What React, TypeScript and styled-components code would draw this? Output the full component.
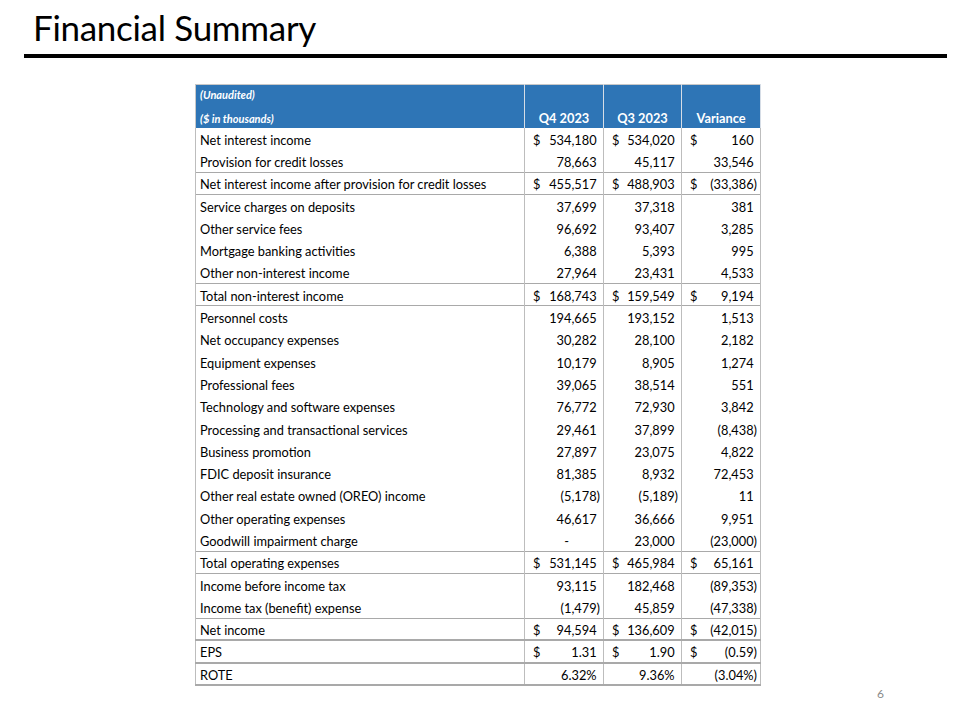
import React from "react";
import styled, { createGlobalStyle } from "styled-components";

const Global = createGlobalStyle`
  html, body { margin: 0; padding: 0; background: #fff; }
  body { font-family: Lato, "Open Sans", Arial, sans-serif; }
`;

const Page = styled.div`
  width: 958px;
  height: 720px;
  display: flex;
  flex-direction: column;
  box-sizing: border-box;
  overflow: hidden;
  & > * { flex-shrink: 0; }
`;

const Title = styled.h1`
  margin: 0;
  padding: 9px 0 0 33px;
  height: 45px;
  box-sizing: border-box;
  font-family: Lato, sans-serif;
  font-weight: 400;
  font-size: 35px;
  line-height: 36px;
  letter-spacing: -0.3px;
  color: #000;
`;

const Rule = styled.div`
  margin: 9px 11px 0 24px;
  height: 4px;
  background: #000;
`;

const TableWrap = styled.div`
  padding: 26px 0 0 195px;
`;

const Table = styled.table`
  border-collapse: collapse;
  table-layout: fixed;
  width: 565px;
  font-family: Lato, sans-serif;
  font-size: 12.8px;
  color: #000;
`;

const HeadRow = styled.tr`
  height: 43px;
  background: #2e75b6;
`;

const HeadLabel = styled.th`
  padding: 0 0 0 4px;
  text-align: left;
  vertical-align: top;
  color: #fff;
  font-style: italic;
  font-weight: 700;
  font-size: 11px;
  border-top: 1px solid #c8c8c8;
  border-right: 1px solid #d6dde6;
  border-left: 1px solid #c8c8c8;
`;

const HeadLine = styled.div<{ $top: number }>`
  height: 14px;
  line-height: 14px;
  margin-top: ${(p) => p.$top}px;
`;

const HeadCol = styled.th`
  padding: 0 0 2px;
  text-align: center;
  vertical-align: bottom;
  color: #fff;
  font-weight: 700;
  font-size: 12.8px;
  border-top: 1px solid #c8c8c8;
  border-right: 1px solid #d6dde6;
`;

const Row = styled.tr<{ $line: number }>`
  height: 22.3px;
  border-bottom: ${(p) => (p.$line ? `${p.$line}px solid #a9a9a9` : "none")};
`;

const Label = styled.td`
  padding: 2px 0 0 4px;
  white-space: nowrap;
  border-left: 1px solid #bdbdbd;
  border-right: 1px solid #bdbdbd;
`;

const NumCell = styled.td`
  padding: 2px 3px 0 8px;
  border-right: 1px solid #bdbdbd;
`;

const NumInner = styled.div`
  display: flex;
  justify-content: space-between;
  white-space: nowrap;
`;

const Value = styled.span<{ $dash?: boolean }>`
  margin-left: auto;
  padding-right: ${(p) => (p.$dash ? "31px" : "0")};
`;

const Paren = styled.span<{ $hide: boolean }>`
  visibility: ${(p) => (p.$hide ? "hidden" : "visible")};
`;

const Footer = styled.div`
  margin-top: auto;
  padding: 0 74px 20px 0;
  text-align: right;
  font-family: Lato, sans-serif;
  font-size: 12px;
  line-height: 15px;
  color: #8a8a8a;
`;

type R = { label: string; v: string[]; dollar?: boolean; line?: number };

const rows: R[] = [
  { label: "Net interest income", v: ["534,180", "534,020", "160"], dollar: true },
  { label: "Provision for credit losses", v: ["78,663", "45,117", "33,546"], line: 1 },
  { label: "Net interest income after provision for credit losses", v: ["455,517", "488,903", "(33,386)"], dollar: true, line: 1 },
  { label: "Service charges on deposits", v: ["37,699", "37,318", "381"] },
  { label: "Other service fees", v: ["96,692", "93,407", "3,285"] },
  { label: "Mortgage banking activities", v: ["6,388", "5,393", "995"] },
  { label: "Other non-interest income", v: ["27,964", "23,431", "4,533"], line: 1 },
  { label: "Total non-interest income", v: ["168,743", "159,549", "9,194"], dollar: true, line: 1 },
  { label: "Personnel costs", v: ["194,665", "193,152", "1,513"] },
  { label: "Net occupancy expenses", v: ["30,282", "28,100", "2,182"] },
  { label: "Equipment expenses", v: ["10,179", "8,905", "1,274"] },
  { label: "Professional fees", v: ["39,065", "38,514", "551"] },
  { label: "Technology and software expenses", v: ["76,772", "72,930", "3,842"] },
  { label: "Processing and transactional services", v: ["29,461", "37,899", "(8,438)"] },
  { label: "Business promotion", v: ["27,897", "23,075", "4,822"] },
  { label: "FDIC deposit insurance", v: ["81,385", "8,932", "72,453"] },
  { label: "Other real estate owned (OREO) income", v: ["(5,178)", "(5,189)", "11"] },
  { label: "Other operating expenses", v: ["46,617", "36,666", "9,951"] },
  { label: "Goodwill impairment charge", v: ["-", "23,000", "(23,000)"], line: 1 },
  { label: "Total operating expenses", v: ["531,145", "465,984", "65,161"], dollar: true, line: 1 },
  { label: "Income before income tax", v: ["93,115", "182,468", "(89,353)"] },
  { label: "Income tax (benefit) expense", v: ["(1,479)", "45,859", "(47,338)"], line: 1 },
  { label: "Net income", v: ["94,594", "136,609", "(42,015)"], dollar: true, line: 2 },
  { label: "EPS", v: ["1.31", "1.90", "(0.59)"], dollar: true, line: 2 },
  { label: "ROTE", v: ["6.32%", "9.36%", "(3.04%)"], line: 2 },
];

function Num({ text, dollar }: { text: string; dollar?: boolean }) {
  const neg = text.startsWith("(");
  const dash = text === "-";
  const body = neg ? text.slice(0, -1) : text;
  return (
    <NumInner>
      {dollar && <span>$</span>}
      <Value $dash={dash}>
        {body}
        {!dash && <Paren $hide={!neg}>)</Paren>}
      </Value>
    </NumInner>
  );
}

export default function App() {
  return (
    <Page>
      <Global />
      <Title>Financial Summary</Title>
      <Rule />
      <TableWrap>
        <Table>
          <colgroup>
            <col style={{ width: 329 }} />
            <col style={{ width: 79 }} />
            <col style={{ width: 78 }} />
            <col style={{ width: 79 }} />
          </colgroup>
          <thead>
            <HeadRow>
              <HeadLabel>
                <HeadLine $top={3}>(Unaudited)</HeadLine>
                <HeadLine $top={10}>($ in thousands)</HeadLine>
              </HeadLabel>
              <HeadCol>Q4 2023</HeadCol>
              <HeadCol>Q3 2023</HeadCol>
              <HeadCol>Variance</HeadCol>
            </HeadRow>
          </thead>
          <tbody>
            {rows.map((r) => (
              <Row key={r.label} $line={r.line ?? 0}>
                <Label>{r.label}</Label>
                {r.v.map((t, i) => (
                  <NumCell key={i}>
                    <Num text={t} dollar={r.dollar} />
                  </NumCell>
                ))}
              </Row>
            ))}
          </tbody>
        </Table>
      </TableWrap>
      <Footer>6</Footer>
    </Page>
  );
}
